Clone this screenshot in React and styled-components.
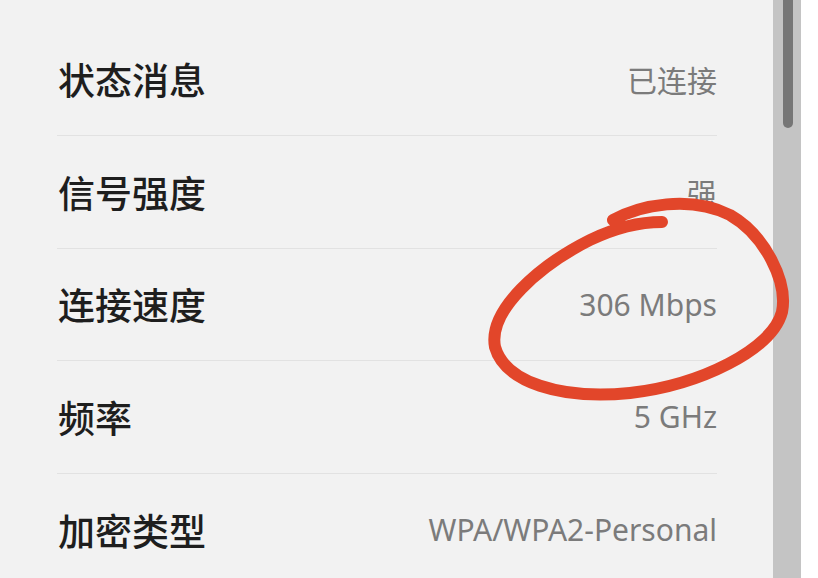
import styled, { createGlobalStyle } from "styled-components";

const GlobalStyle = createGlobalStyle`
  html, body {
    margin: 0;
    padding: 0;
    background: #ffffff;
  }
  body {
    font-family: "Noto Sans", "Noto Sans CJK SC", sans-serif;
  }
`;

const Screen = styled.div`
  display: flex;
  width: 818px;
  height: 578px;
  overflow: hidden;
  background: #ffffff;
`;

const Panel = styled.section`
  position: relative;
  width: 773px;
  height: 578px;
  background: #f2f2f2;
  padding-top: 23.5px;
  box-sizing: border-box;
`;

const List = styled.div`
  display: flex;
  flex-direction: column;
  margin: 0 56px 0 57px;
`;

const Row = styled.div`
  display: flex;
  align-items: center;
  justify-content: space-between;
  height: 112.5px;
  box-sizing: border-box;
  border-bottom: ${(p) => (p.$last ? "none" : "1.5px solid #e2e2e2")};
`;

const Label = styled.span`
  font-family: "Noto Sans CJK SC", sans-serif;
  font-size: 37px;
  font-weight: 500;
  color: #1e1e1e;
  padding-left: 1px;
`;

const Value = styled.span`
  font-family: "Noto Sans", "Noto Sans CJK SC", sans-serif;
  font-size: 30px;
  color: #7b7b7b;
`;

const Track = styled.div`
  width: 28px;
  height: 578px;
  background: #c4c4c4;
  display: flex;
  justify-content: center;
  padding-left: 1px;
  box-sizing: border-box;
`;

const Thumb = styled.div`
  width: 10px;
  height: 128px;
  background: #767676;
  border-radius: 0 0 5px 5px;
`;

const Scribble = styled.svg`
  position: absolute;
  left: 0;
  top: 0;
  pointer-events: none;
  overflow: visible;
`;

const rows = [
  ["状态消息", "已连接"],
  ["信号强度", "强"],
  ["连接速度", "306 Mbps"],
  ["频率", "5 GHz"],
  ["加密类型", "WPA/WPA2-Personal"],
];

export default function App() {
  return (
    <Screen>
      <GlobalStyle />
      <Panel>
        <List>
          {rows.map(([label, value], i) => (
            <Row key={label} $last={i === rows.length - 1}>
              <Label>{label}</Label>
              <Value>{value}</Value>
            </Row>
          ))}
        </List>
        <Scribble width="818" height="578">
          <path
            d="M 613 220 C 640 205, 690 195, 730 215 C 765 235, 788 282, 782 312 C 772 350, 700 385, 630 393 C 560 400, 505 382, 495 347 C 488 310, 540 265, 590 240 C 615 228, 640 222, 662 222"
            fill="none"
            stroke="#e2462a"
            strokeWidth="12"
            strokeLinecap="round"
            strokeLinejoin="round"
          />
        </Scribble>
      </Panel>
      <Track>
        <Thumb />
      </Track>
    </Screen>
  );
}
